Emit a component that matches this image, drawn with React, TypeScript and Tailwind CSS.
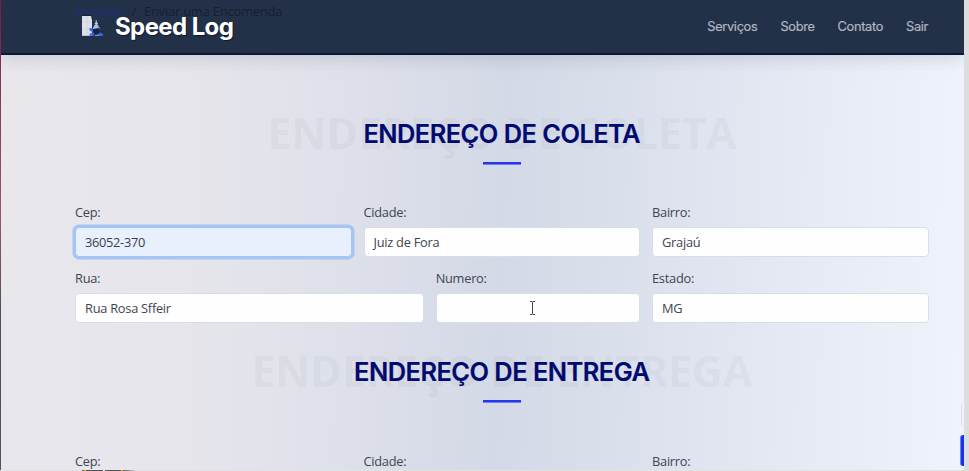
import React from "react";

const body = "font-['Open_Sans','Noto_Sans',sans-serif]";
const display = "font-['Inter',sans-serif]";

function Field({
  label,
  value,
  span,
  focused = false,
  children,
}: {
  label: string;
  value: string;
  span: string;
  focused?: boolean;
  children?: React.ReactNode;
}) {
  return (
    <div className={span}>
      <div className="h-[24px] text-[12.8px] leading-[18px] tracking-[-0.25px] text-[#41454f]">{label}</div>
      <div
        className={
          focused
            ? "relative flex h-[30px] items-center rounded-[4px] border border-[#a3c4f5] bg-[#e8f0fe] px-[9px] pt-px text-[12.8px] tracking-[-0.3px] text-[#3b4048] shadow-[0_0_0_2.5px_#a5c5f3]"
            : "relative flex h-[30px] items-center rounded-[4px] border border-[#dadde4] bg-[#fefefe] px-[9px] pt-px text-[12.8px] tracking-[-0.25px] text-[#41454f]"
        }
      >
        {value}
        {children}
      </div>
    </div>
  );
}

function SectionTitle({ title }: { title: string }) {
  return (
    <div className="relative flex h-[60px] flex-col items-center">
      <div
        aria-hidden="true"
        className="absolute left-1/2 -top-px -translate-x-1/2 whitespace-nowrap text-[43px] font-bold leading-[60px] tracking-[-0.2px] text-[#101010]/[0.055]"
      >
        {title}
      </div>
      <h2 className={"relative pt-[15px] whitespace-nowrap text-[25.4px] font-semibold leading-[30px] tracking-[-0.52px] text-[#020a70] [-webkit-text-stroke:0.2px_#020a70] " + display}>
        {title}
      </h2>
      <div className="relative mt-[13px] h-[3px] w-[38px] shrink-0 border-b border-[#7080ee] bg-[#2438ea]" />
    </div>
  );
}

function DeliveryLogo() {
  return (
    <svg width="24" height="22" viewBox="0 0 24 22" className="shrink-0">
      <path d="M1 .8h10v20H1z" fill="#dfe1ea" />
      <path d="M1 7h10M1 14h10M6 1v20" stroke="#c9cddb" strokeWidth=".7" />
      <path d="M1 .5h9.500l.8 4" stroke="#172238" fill="none" />
      <path d="M15 5l.5 3" stroke="#bac9eb" strokeWidth="1" />
      <circle cx="15.3" cy="8.500" r="1.500" fill="#bac9eb" />
      <path d="M12 13l1.500-3h3.500l2 4-4 2-3-1z" fill="#a9bce8" />
      <path d="M8 13.500l3-.5 2 2.500-1 1.500-3-1zM17 10l2.500 3.500-1 1.500zM8.500 19l4-2 1.500 2.500-2 1.500-3.500-.5zM17.500 16.500l5 3-1 1.500h-4z" fill="#3468f4" />
      <path d="M12 14l6-1 1 4-1.500 2.500h-4l-1.500-3z" fill="#18243c" />
      <path d="M14 20l4-.5v1.300h-4z" fill="#9eb3e8" />
    </svg>
  );
}

export default function App() {
  return (
    <div className={"relative h-[471px] w-[969px] overflow-hidden border-r-[5px] border-[#dcdddd] bg-[linear-gradient(92deg,#e8e7ec_0%,#e6e5ec_20%,#dfe1ea_34%,#d4d9e7_52%,#d9deeb_62%,#e2e7f2_78%,#eff3fb_100%)] " + body}>
      <header className="relative flex h-[55px] items-start justify-between border-b-2 border-[#0d1838] bg-[#233148] pl-[81px] pr-[36px] shadow-[0_2px_18px_rgba(20,30,60,0.16)]">
        <div className="absolute left-[75px] top-[2px] flex text-[13px] leading-[18px] tracking-[-0.25px] text-[#151f30]">
          <span className="w-[49px] text-[#202d7c]">Serviços</span>
          <span className="w-[20px] text-center">/</span>
          <span>Enviar uma Encomenda</span>
        </div>
        <div className="relative flex pt-[15px]">
          <DeliveryLogo />
          <span className={"-mt-[3px] ml-[10px] text-[24px] font-bold leading-[30px] tracking-[-0.6px] text-white [text-shadow:1px_1px_1px_#101b2e] " + display}>Speed Log</span>
        </div>
        <nav className={"relative flex gap-[23px] pt-[17px] text-[12.8px] leading-[20px] tracking-[-0.33px] text-[#b0b6c2] [-webkit-text-stroke:0.2px_#b0b6c2] " + display}>
          <span>Serviços</span>
          <span>Sobre</span>
          <span>Contato</span>
          <span>Sair</span>
        </nav>
      </header>
      <main className="pl-[75px] pr-[35.5px] pt-[49px]">
        <SectionTitle title="ENDEREÇO DE COLETA" />
        <div className="mt-[39px] grid grid-cols-12 gap-x-[12px] gap-y-[12px]">
          <Field label="Cep:" value="36052-370" span="col-span-4" focused />
          <Field label="Cidade:" value="Juiz de Fora" span="col-span-4" />
          <Field label="Bairro:" value="Grajaú" span="col-span-4" />
          <Field label="Rua:" value="Rua Rosa Sffeir" span="col-span-5" />
          <Field label="Numero:" value="" span="col-span-3">
            <svg className="absolute left-[92px] top-[7px]" width="7" height="14" viewBox="0 0 7 14">
              <path d="M1 .5h2l.5.5L4 .5h2M3.5 1v12M1 13.5h2l.5-.5.5.5h2" stroke="#454545" fill="none" />
            </svg>
          </Field>
          <Field label="Estado:" value="MG" span="col-span-4" />
        </div>
        <div className="mt-[19px]">
          <SectionTitle title="ENDEREÇO DE ENTREGA" />
        </div>
        <div className="mt-[50px] grid grid-cols-12 gap-x-[12px]">
          <Field label="Cep:" value="" span="col-span-4" />
          <Field label="Cidade:" value="" span="col-span-4" />
          <Field label="Bairro:" value="" span="col-span-4" />
        </div>
      </main>
      <div className="absolute left-0 top-0 h-full w-px bg-[linear-gradient(#761f48,#a15265_45%,#555059_65%)]" />
      <div className="absolute right-0 top-[435px] h-[31px] w-[4px] rounded-l-[3px] border-l border-[#7185e6] bg-[#1532ed]" />
      <div className="absolute right-0 top-[403px] h-[23px] w-[3px] rounded-l-full border-l border-[#d9dfe5]" />
      <div className="absolute bottom-0 left-0 h-px w-full bg-[#e2e2e5]" />
      <div className="absolute bottom-0 left-[82px] flex h-px w-[54px] bg-[linear-gradient(90deg,#555_0_2px,#e9ad26_2px_4px,#555_4px_21px,#eee_21px_23px,#555_23px_39px,#e9ad26_39px_41px,#555_41px,#ddd)]" />
    </div>
  );
}
